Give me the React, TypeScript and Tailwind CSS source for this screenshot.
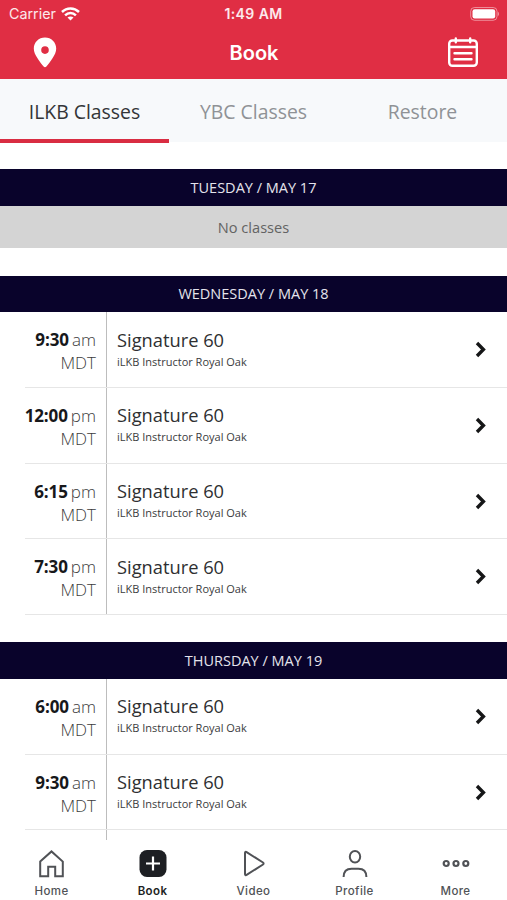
import { useState, type ReactNode } from "react";

interface ClassSlot {
  time: string;
  period: "am" | "pm";
}

interface ScheduleDay {
  label: string;
  slots: ClassSlot[];
}

const TABS = ["ILKB Classes", "YBC Classes", "Restore"];

const SCHEDULE: ScheduleDay[] = [
  { label: "TUESDAY / MAY 17", slots: [] },
  {
    label: "WEDNESDAY / MAY 18",
    slots: [
      { time: "9:30", period: "am" },
      { time: "12:00", period: "pm" },
      { time: "6:15", period: "pm" },
      { time: "7:30", period: "pm" },
    ],
  },
  {
    label: "THURSDAY / MAY 19",
    slots: [
      { time: "6:00", period: "am" },
      { time: "9:30", period: "am" },
    ],
  },
];

function StatusBar() {
  return (
    <div className="grid h-[26px] grid-cols-3 items-center px-2 pt-0.5 font-[Inter,sans-serif] leading-none text-white/90">
      <div className="flex items-center gap-[5px] pl-px">
        <span className="text-[14.3px]">Carrier</span>
        <svg width="19" height="14" viewBox="0 0 19 14" fill="none" stroke="#fff" strokeWidth="2.5" aria-hidden="true">
          <path d="M1 5C5.8.3 13.2.3 18 5" />
          <path d="M4.1 8.3c3.1-3 7.7-3 10.8 0" />
          <path d="M9.5 13.5 6.5 10.6c1.7-1.6 4.3-1.6 6 0Z" fill="#fff" stroke="none" />
        </svg>
      </div>
      <span className="whitespace-nowrap text-center text-[14px] font-semibold tracking-[0.4px]">1:49 AM</span>
      <svg className="justify-self-end" width="29" height="14" viewBox="0 0 29 14" fill="none" aria-hidden="true">
        <rect x=".7" y=".5" width="26.3" height="12.8" rx="3.8" stroke="#fff" strokeOpacity=".45" />
        <rect x="2.5" y="2.2" width="22.7" height="9.3" rx="2.2" fill="#fff" />
        <path d="M27.8 4.7c1.5.6 1.5 3.8 0 4.4Z" fill="#fff" fillOpacity=".5" />
      </svg>
    </div>
  );
}

function Header() {
  return (
    <header className="h-[79px] bg-[#e02e44]">
      <StatusBar />
      <div className="grid h-[53px] grid-cols-3 items-center px-7 text-white">
        <button type="button" aria-label="Locations" className="ml-[5px] justify-self-start">
          <svg width="24" height="31" viewBox="0 0 24 31" aria-hidden="true">
            <path
              fill="#fff"
              fillRule="evenodd"
              d="M12 .5C5.7.5.8 5.4.8 11.5c0 3.4 1.5 6.5 3.7 9.7 1.9 2.9 4.2 6.1 6.1 8.3.9 1 1.9 1 2.8 0 1.9-2.2 4.2-5.4 6.1-8.3 2.2-3.2 3.7-6.3 3.7-9.7C23.2 5.4 18.3.5 12 .5Zm0 8.8a3.8 3.8 0 1 1 0 7.6 3.800 3.800 0 0 1 0-7.600Z"
            />
          </svg>
        </button>
        <h1 className="pl-px text-center font-[Inter,sans-serif] text-[20px] font-semibold leading-none">Book</h1>
        <button type="button" aria-label="My schedule" className="justify-self-end">
          <svg width="32" height="31" viewBox="0 0 32 31" fill="none" stroke="#fff" strokeWidth="2.4" strokeLinecap="round" aria-hidden="true">
            <rect x="2.2" y="3.5" width="27.6" height="25.3" rx="3.2" />
            <path d="M8.8 1.5v3.7M23.2 1.5v3.7M2.2 10h27.6M7.5 16.2h17M7.5 22.3h17" />
          </svg>
        </button>
      </div>
    </header>
  );
}

function Tabs() {
  const [active, setActive] = useState(TABS[0]);

  return (
    <nav className="grid h-[63px] grid-cols-3 bg-[#f7f9fb]">
      {TABS.map((tab) => (
        <button
          key={tab}
          type="button"
          onClick={() => setActive(tab)}
          className={`h-16 border-b-4 pt-[5px] text-[19.4px] ${
            active === tab ? "border-[#d92d42] text-[#333538]" : "border-transparent text-[#8f9296]"
          }`}
        >
          {tab}
        </button>
      ))}
    </nav>
  );
}

function ClassRow({ time, period }: ClassSlot) {
  return (
    <li className="ml-[25px] flex h-[75.75px] border-b border-[#e6e6e6]">
      <div className="w-[82px] shrink-0 border-r border-[#bdbdbd] pr-2.5 pt-4 text-right text-[17px] leading-[23px] text-[#3c3c3c]">
        <div className="flex justify-end gap-[3px] whitespace-nowrap font-light">
          <span className="font-bold tracking-[-0.1px] text-[#17181b]">{time}</span>
          <span>{period}</span>
        </div>
        <div className="font-light">MDT</div>
      </div>
      <div className="flex-1 pl-2.5 pt-[14.6px]">
        <p className="text-[18.3px] leading-[25px] text-[#2e2f31]">Signature 60</p>
        <p className="text-[11px] leading-[19px] text-[#3a3b3d]">iLKB Instructor Royal Oak</p>
      </div>
      <svg
        className="mr-5 mt-[29px]"
        width="12"
        height="17"
        viewBox="0 0 12 17"
        fill="none"
        stroke="#151617"
        strokeWidth="3.4"
        aria-hidden="true"
      >
        <path d="m2 2 6.4 6.5L2 15" />
      </svg>
    </li>
  );
}

function DaySection({ label, slots }: ScheduleDay) {
  return (
    <section className="mt-[27.3px] shrink-0">
      <h2 className="flex h-[36.5px] items-center justify-center bg-[#09032b] text-[14.5px] text-[#e4e3ec]">{label}</h2>
      {slots.length === 0 ? (
        <p className="flex h-[42.5px] items-center justify-center bg-[#d4d4d4] pt-px text-[14.6px] text-[#636363]">
          No classes
        </p>
      ) : (
        <ul>
          {slots.map((slot) => (
            <ClassRow key={slot.time} {...slot} />
          ))}
        </ul>
      )}
    </section>
  );
}

interface NavItemProps {
  label: string;
  active?: boolean;
  children: ReactNode;
}

function NavItem({ label, active = false, children }: NavItemProps) {
  return (
    <button
      type="button"
      className={`flex flex-col items-center gap-[5px] pt-[9px] font-[Inter,sans-serif] text-[11.5px] leading-[15px] tracking-[0.4px] ${
        active ? "font-semibold text-[#1d1f23]" : "font-medium text-[#505256]"
      }`}
    >
      <svg width="30" height="30" viewBox="0 0 30 30" fill="none" stroke="currentColor" strokeWidth="2" aria-hidden="true">
        {children}
      </svg>
      {label}
    </button>
  );
}

function BottomNav() {
  return (
    <nav className="grid h-[60px] grid-cols-5 bg-white px-px">
      <NavItem label="Home">
        <path d="M3.2 12.600 14.500 2.400l11.300 10.200v14.600h-7.600v-9.400h-7v9.400h-8Z" />
      </NavItem>
      <NavItem label="Book" active>
        <rect x="1.5" y="1" width="27" height="27" rx="7.5" fill="currentColor" stroke="none" />
        <path d="M15 7.5v14M8 14.5h14" stroke="#fff" strokeWidth="2.2" />
      </NavItem>
      <NavItem label="Video">
        <path d="M6 4v21c0 1 .8 1.4 1.6.9L24 15.5c.8-.5.8-1.5 0-2L7.6 3.1C6.800 2.600 6 3 6 4Z" />
      </NavItem>
      <NavItem label="Profile">
        <ellipse cx="15" cy="7.7" rx="5.2" ry="5.8" />
        <path d="M3.6 28c0-5.700 3.200-8.300 8-8.300h6.800c4.800 0 8 2.600 8 8.300" />
      </NavItem>
      <NavItem label="More">
        <g strokeWidth="2.2">
          <circle cx="5.2" cy="14.5" r="2.5" />
          <circle cx="15" cy="14.5" r="2.5" />
          <circle cx="24.8" cy="14.5" r="2.5" />
        </g>
      </NavItem>
    </nav>
  );
}

export default function App() {
  return (
    <div className="flex h-[900px] w-[507px] flex-col overflow-hidden bg-white font-['Open_Sans',sans-serif]">
      <Header />
      <Tabs />
      <main className="flex min-h-0 flex-1 flex-col overflow-hidden">
        {SCHEDULE.map((day) => (
          <DaySection key={day.label} {...day} />
        ))}
        {/* top edge of the next row's time divider */}
        <div className="ml-[25px] h-[9.5px] w-[82px] shrink-0 border-r border-[#bdbdbd]" />
      </main>
      <BottomNav />
    </div>
  );
}
